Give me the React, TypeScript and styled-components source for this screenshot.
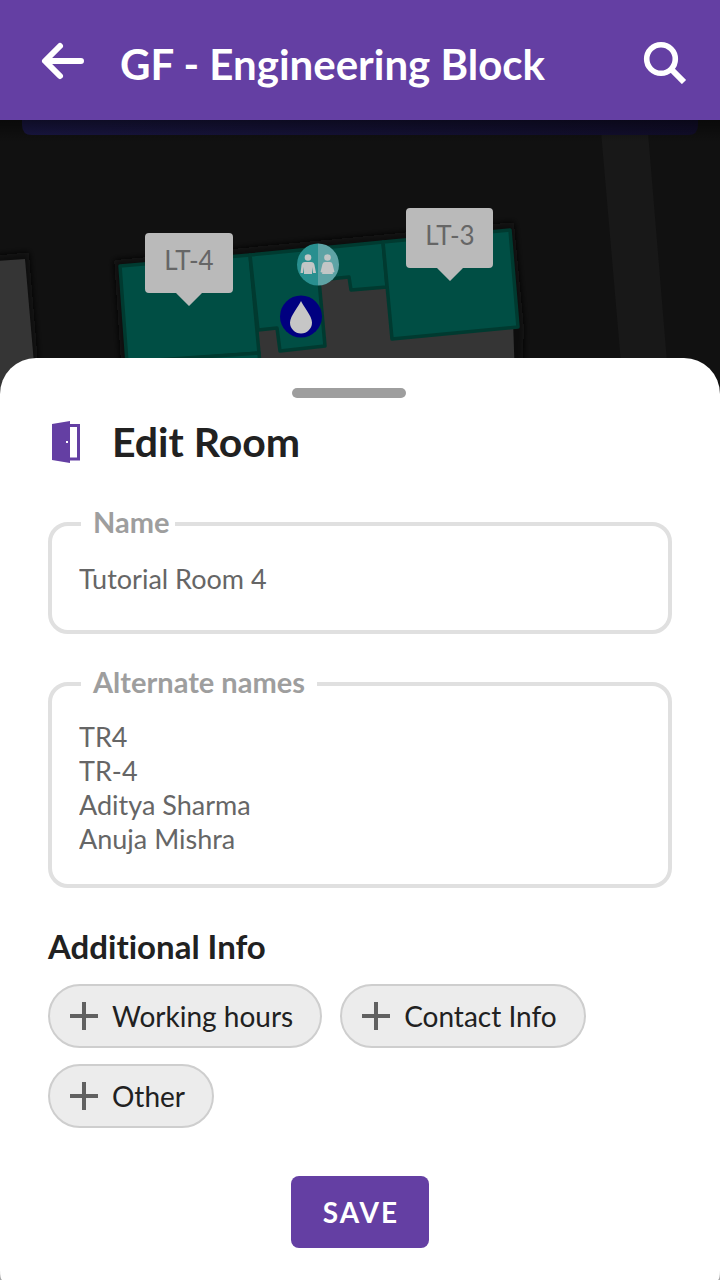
import React from 'react';
import styled, { createGlobalStyle } from 'styled-components';

const purple = '#643fa3';
const ink = '#212121';
const muted = '#666666';

const GlobalStyle = createGlobalStyle`
  *, *::before, *::after { box-sizing: border-box; }
  body {
    margin: 0;
    background: #111111;
    color: ${ink};
    font-family: Lato, Roboto, sans-serif;
    font-variant-ligatures: none;
  }
  button, input, textarea { font: inherit; font-variant-ligatures: inherit; }
`;

const Screen = styled.div`
  display: flex;
  flex-direction: column;
  min-height: 100vh;
`;

const AppBar = styled.header`
  display: flex;
  align-items: center;
  height: 120px;
  padding: 8px 32px 0 40px;
  background: ${purple};
  color: #ffffff;
`;

const AppTitle = styled.h1`
  flex: 1;
  margin: 0 0 0 32px;
  font-size: 42px;
  line-height: 48px;
  font-weight: 700;
`;

const IconButton = styled.button`
  display: flex;
  align-items: center;
  justify-content: center;
  width: 48px;
  height: 48px;
  margin-bottom: 8px;
  padding: 0;
  border: 0;
  background: none;
  color: inherit;
  cursor: pointer;
`;

const MapArea = styled.section`
  height: 290px;
  margin-bottom: -52px;
  overflow: hidden;
`;

const MapDrawing = styled.svg`
  display: block;
  width: 100%;
  height: 100%;
`;

const MapLabel = styled.text`
  font-size: 26px;
  fill: #666666;
  text-anchor: middle;
`;

const Backdrop = styled.main`
  display: flex;
  flex: 1;
  position: relative;
  background: linear-gradient(transparent 60px, #a8a8a8 60px);
`;

const Sheet = styled.form`
  display: flex;
  flex: 1;
  flex-direction: column;
  padding: 30px 48px 32px;
  border-radius: 36px 36px 2px 2px / 36px 36px 10px 10px;
  background: #ffffff;
`;

const HandleRow = styled.div`
  display: flex;
  justify-content: center;
  padding-right: 22px;
`;

const Handle = styled.div`
  width: 114px;
  height: 10px;
  border-radius: 5px;
  background: #9e9e9e;
`;

const SheetHeading = styled.div`
  display: flex;
  align-items: center;
  gap: 32px;
  margin-top: 20px;
  padding-left: 4px;
`;

const SheetTitle = styled.h2`
  margin: 0;
  font-size: 41px;
  line-height: 48px;
  font-weight: 700;
`;

const Field = styled.fieldset<{ $gapTop: number }>`
  min-width: 0;
  margin: ${(p) => p.$gapTop}px 0 0;
  padding: 0 27px 28px;
  border: 4px solid #e0e0e0;
  border-radius: 20px;
`;

const Legend = styled.legend<{ $gapRight: number }>`
  padding: 0 ${(p) => p.$gapRight}px 4px 12px;
  margin-left: 2px;
  color: #9e9e9e;
  font-size: 29px;
  line-height: 32px;
  font-weight: 700;
`;

const TextInput = styled.input`
  display: block;
  width: 100%;
  height: 34px;
  margin: 20px 0 6px;
  padding: 0;
  border: 0;
  outline: 0;
  background: none;
  color: ${muted};
  font-size: 27px;
  line-height: 34px;
`;

const TextArea = styled.textarea`
  display: block;
  width: 100%;
  height: 136px;
  margin-top: 18px;
  padding: 0;
  border: 0;
  outline: 0;
  resize: none;
  overflow: hidden;
  background: none;
  color: ${muted};
  font-size: 27px;
  line-height: 34px;
`;

const SectionTitle = styled.h3`
  margin: 38px 0 0;
  font-size: 33px;
  line-height: 40px;
  font-weight: 700;
`;

const Chips = styled.div`
  display: flex;
  flex-wrap: wrap;
  gap: 16px 18px;
  margin-top: 18px;
`;

const Chip = styled.button`
  display: flex;
  align-items: center;
  gap: 14px;
  height: 64px;
  padding: 0 27px 0 20px;
  border: 2px solid #cecece;
  border-radius: 32px;
  background: #ececec;
  color: ${ink};
  font-size: 28px;
  line-height: 34px;
  cursor: pointer;
`;

const SaveButton = styled.button`
  align-self: center;
  min-width: 138px;
  height: 72px;
  margin-top: 48px;
  padding: 0 28px 0 30px;
  border: 0;
  border-radius: 8px;
  background: ${purple};
  color: #ffffff;
  font-size: 28px;
  line-height: 34px;
  font-weight: 700;
  letter-spacing: 2px;
  cursor: pointer;
`;

const BackIcon = () => (
  <svg width="48" height="48" viewBox="0 0 48 48" fill="none" stroke="currentColor" strokeWidth="6" strokeLinecap="round" strokeLinejoin="round" aria-hidden="true">
    <path d="M20 10 5 25 20 40M6 25H41" />
  </svg>
);

const SearchIcon = () => (
  <svg width="48" height="48" viewBox="0 0 48 48" fill="none" stroke="currentColor" aria-hidden="true">
    <circle cx="21" cy="23" r="14.3" strokeWidth="5.6" />
    <path d="M31 33 44 46" strokeWidth="6" />
  </svg>
);

const DoorIcon = () => (
  <svg width="28" height="42" viewBox="0 0 28 42" aria-hidden="true">
    <path d="M0 3 18 0V42L0 39Z" fill={purple} />
    <path d="M17 4.500H26.500V38H17" fill="none" stroke={purple} strokeWidth="3" />
    <rect x="14" y="20" width="2" height="2" fill="#ffffff" />
  </svg>
);

const PlusIcon = () => (
  <svg width="28" height="28" viewBox="0 0 28 28" aria-hidden="true">
    <path d="M14 0V28M0 14H28" stroke="#616161" strokeWidth="4" />
  </svg>
);

function FloorMap() {
  return (
    <MapArea aria-label="Floor map">
      <MapDrawing viewBox="0 120 720 290" preserveAspectRatio="xMidYMin slice" role="img">
        <defs>
          <linearGradient id="barShade" x1="0" y1="0" x2="0" y2="1">
            <stop offset="0" stopColor="#000000" stopOpacity="0.45" />
            <stop offset="1" stopColor="#000000" stopOpacity="0" />
          </linearGradient>
          <linearGradient id="banner" x1="0" y1="0" x2="1" y2="0">
            <stop offset="0" stopColor="#1a1745" />
            <stop offset="1" stopColor="#120e2d" />
          </linearGradient>
          <filter id="soft" x="-10%" y="-10%" width="120%" height="120%">
            <feGaussianBlur stdDeviation="3" />
          </filter>
        </defs>
        <rect y="120" width="720" height="290" fill="#111111" />
        <path d="M600 120H647L671 410H625Z" fill="#181818" />
        <path d="M22 110H698V125Q698 135 688 135H32Q22 135 22 125Z" fill="url(#banner)" />
        <rect y="120" width="720" height="22" fill="url(#barShade)" />

        <g fill="#0a0a0a" filter="url(#soft)">
          <path d="M-10 256 29 252 42 410H-10Z" />
          <path d="M114 260 514 222 524 327 522 410H124Z" />
        </g>
        <path d="M-4 261 25 259 38 410H-4Z" fill="#353535" />
        <path d="M240 260 510 230 516 410H240Z" fill="#353535" />

        <g fill="#004e44" stroke="#003a30" strokeWidth="3.5" strokeLinejoin="round">
          <path d="M120 266 250 255 259 353 127 363Z" />
          <path d="M127 362 259 353 264 410H131Z" />
          <path d="M250 255 383 242 387 287 351 290 349 277 319 280 325 346 280 351 277 328 258 330Z" />
          <path d="M383 242 510 230 518 327 392 339Z" />
        </g>

        <g fill="#bababa">
          <path d="M149 233H229Q233 233 233 237V289Q233 293 229 293H202L189 306 176 293H149Q145 293 145 289V237Q145 233 149 233Z" />
          <path d="M410 208H489Q493 208 493 212V264Q493 268 489 268H463L450 281 437 268H410Q406 268 406 264V212Q406 208 410 208Z" />
        </g>
        <MapLabel x="189" y="270">LT-4</MapLabel>
        <MapLabel x="450" y="245">LT-3</MapLabel>

        <path d="M318 243.500A21 21 0 0 0 318 285.500Z" fill="#288f8f" />
        <path d="M318 243.500A21 21 0 0 1 318 285.500Z" fill="#5ea3a5" />
        <g fill="#c2c6c6">
          <circle cx="308" cy="257.500" r="3.300" />
          <path d="M305 262H311Q314 262 314.500 265L316 273H313L312 267V274H304V267L303 273H300.500L301.500 265Q302 262 305 262Z" />
          <circle cx="327.500" cy="257.500" r="3.300" />
          <path d="M325 262H330Q332 262 332.500 264L334.500 272 332 273 331 268 333 274H322L324 268 323 273 320.500 272 322.500 264Q323 262 325 262Z" />
        </g>

        <circle cx="301" cy="316.500" r="21" fill="#000080" />
        <path d="M301 301C303 306 312 316 312 322.500A11 11 0 0 1 290 322.500C290 316 299 306 301 301Z" fill="#c6c6c6" />
      </MapDrawing>
    </MapArea>
  );
}

const infoKinds = ['Working hours', 'Contact Info', 'Other'];

export default function App() {
  return (
    <Screen>
      <GlobalStyle />
      <AppBar>
        <IconButton type="button" aria-label="Back"><BackIcon /></IconButton>
        <AppTitle>GF - Engineering Block</AppTitle>
        <IconButton type="button" aria-label="Search"><SearchIcon /></IconButton>
      </AppBar>
      <FloorMap />
      <Backdrop>
        <Sheet onSubmit={(e) => e.preventDefault()}>
          <HandleRow><Handle /></HandleRow>
          <SheetHeading>
            <DoorIcon />
            <SheetTitle>Edit Room</SheetTitle>
          </SheetHeading>
          <Field $gapTop={40}>
            <Legend $gapRight={6}><label htmlFor="room-name">Name</label></Legend>
            <TextInput id="room-name" defaultValue="Tutorial Room 4" />
          </Field>
          <Field $gapTop={32}>
            <Legend $gapRight={12}><label htmlFor="alternate-names">Alternate names</label></Legend>
            <TextArea id="alternate-names" defaultValue={'TR4\nTR-4\nAditya Sharma\nAnuja Mishra'} />
          </Field>
          <SectionTitle>Additional Info</SectionTitle>
          <Chips>
            {infoKinds.map((kind) => (
              <Chip key={kind} type="button"><PlusIcon />{kind}</Chip>
            ))}
          </Chips>
          <SaveButton type="submit">SAVE</SaveButton>
        </Sheet>
      </Backdrop>
    </Screen>
  );
}
